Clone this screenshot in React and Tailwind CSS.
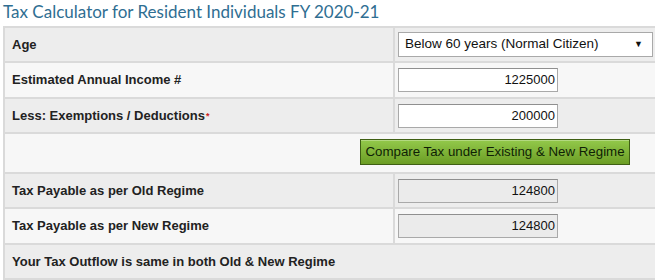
import React from "react";

const Label = ({ children }) => (
  <div className="w-[388px] flex items-center pl-[7px] text-[13px] font-bold text-[#222222]">
    {children}
  </div>
);

const NumBox = ({ value, ro }) => (
  <div
    className={`w-[160px] h-[24px] border border-[#a9a9a9] border-t-[#8f8f8f] flex items-center justify-end pr-[2px] text-[13px] text-[#111111] ${
      ro ? "bg-[#ebebeb]" : "bg-white"
    }`}
  >
    {value}
  </div>
);

export default function App() {
  return (
    <div className="w-[660px] h-[280px] bg-white overflow-hidden font-['Liberation_Sans',Arial,sans-serif]">
      <h1 className="pl-[3px] pt-[1px] h-[23px] text-[17px] leading-[22px] text-[#2f6e92] font-['Lato',sans-serif] font-normal">
        Tax Calculator for Resident Individuals FY 2020-21
      </h1>
      <div className="ml-[3px] mt-[3px] w-[652px] bg-[#dadada] pt-[2px] pl-[2px] flex flex-col gap-[2px]">
        <div className="h-[33px] flex gap-[2px] bg-[#dadada]">
          <div className="bg-[#ededed] flex"><Label>Age</Label></div>
          <div className="flex-1 bg-[#ededed] flex items-center pl-[3px]">
            <div className="w-[255px] h-[25px] bg-white border border-[#a9a9a9] flex items-center justify-between pl-[6px] pr-[9px] text-[13.5px] text-[#111111]">
              <span>Below 60 years (Normal Citizen)</span>
              <span className="text-[9px] leading-none">▼</span>
            </div>
          </div>
        </div>
        <div className="h-[34px] flex gap-[2px]">
          <div className="bg-[#f7f7f7] flex"><Label>Estimated Annual Income #</Label></div>
          <div className="flex-1 bg-[#f7f7f7] flex items-center pl-[3px]">
            <NumBox value="1225000" />
          </div>
        </div>
        <div className="h-[33px] flex gap-[2px]">
          <div className="bg-[#ededed] flex">
            <Label>
              Less: Exemptions / Deductions
              <span className="text-[#cc2222] text-[9px] font-bold self-start mt-[11px] ml-[1px]">*</span>
            </Label>
          </div>
          <div className="flex-1 bg-[#ededed] flex items-center pl-[3px]">
            <NumBox value="200000" />
          </div>
        </div>
        <div className="h-[38px] bg-[#f7f7f7] flex items-center justify-end pr-[25px] pb-[2px]">
          <button className="w-[270px] h-[26px] border border-[#3f5f14] bg-gradient-to-b from-[#93c94a] to-[#6b9d24] text-[13.3px] text-[#0f1f05] flex items-center justify-center shadow-[inset_0_1px_0_rgba(255,255,255,0.3)]">
            Compare Tax under Existing &amp; New Regime
          </button>
        </div>
        <div className="h-[33px] flex gap-[2px]">
          <div className="bg-[#ededed] flex"><Label>Tax Payable as per Old Regime</Label></div>
          <div className="flex-1 bg-[#ededed] flex items-center pl-[3px]">
            <NumBox value="124800" ro />
          </div>
        </div>
        <div className="h-[34px] flex gap-[2px]">
          <div className="bg-[#f7f7f7] flex"><Label>Tax Payable as per New Regime</Label></div>
          <div className="flex-1 bg-[#f7f7f7] flex items-center pl-[3px]">
            <NumBox value="124800" ro />
          </div>
        </div>
        <div className="h-[33px] bg-[#ededed] flex items-center pl-[7px] text-[13px] font-bold text-[#222222]">
          Your Tax Outflow is same in both Old &amp; New Regime
        </div>
        <div className="h-[4px] bg-[#f7f7f7]"></div>
      </div>
    </div>
  );
}
